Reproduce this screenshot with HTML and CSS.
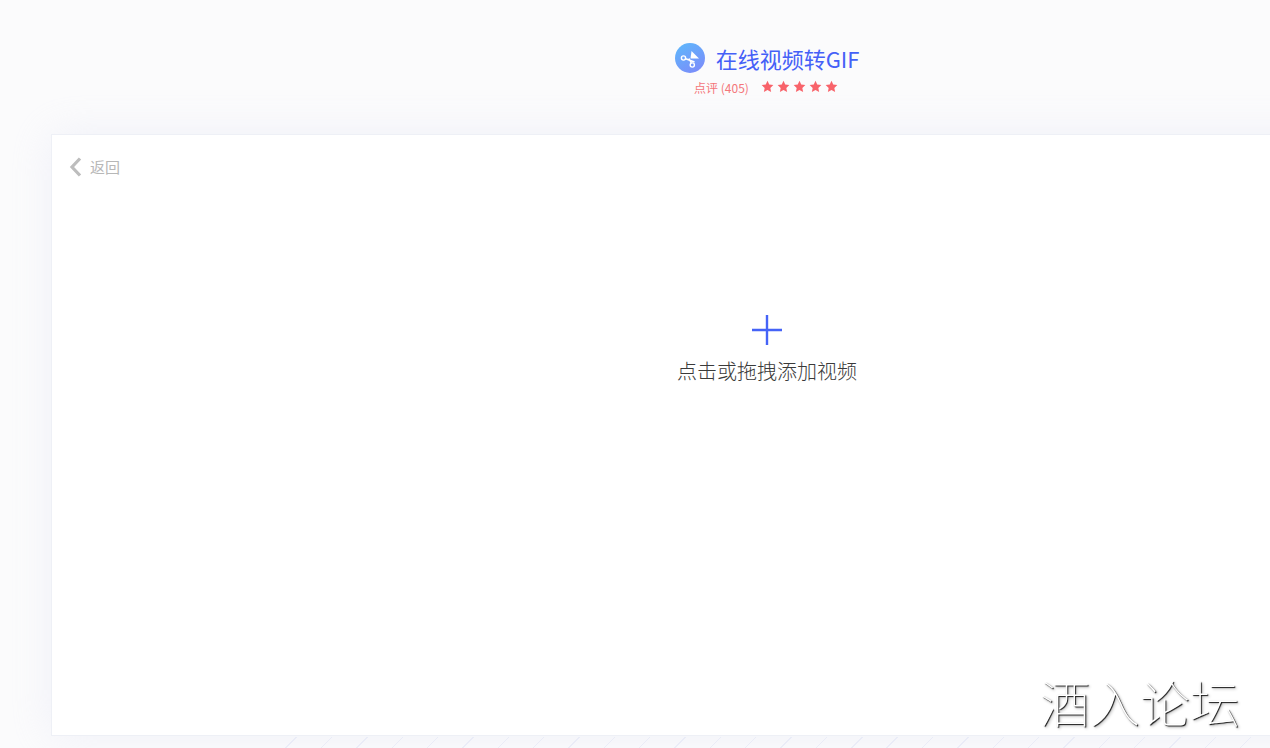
FILE: index.html
```html
<!DOCTYPE html>
<html lang="zh-CN">
<head>
<meta charset="utf-8">
<title>在线视频转GIF</title>
<link rel="stylesheet" href="styles.css">
</head>
<body>
<div class="page">
  <header class="head">
    <div class="title-row">
      <svg class="logo" width="30" height="30" viewBox="0 0 30 30">
        <defs>
          <linearGradient id="lg" x1="0.2" y1="0" x2="0.8" y2="1">
            <stop offset="0" stop-color="#5fb6fb"/>
            <stop offset="1" stop-color="#7c8bfa"/>
          </linearGradient>
        </defs>
        <circle cx="15" cy="15" r="15" fill="url(#lg)"/>
        <path d="M15.500 15.500 L16.500 8 L24 15.500 Z" fill="#fff"/>
        <path d="M10 15.500 L19.500 19 M14 15.500 L16.500 20.500" stroke="#fff" stroke-width="1.500" fill="none"/>
        <circle cx="8.500" cy="15" r="2.100" fill="none" stroke="#fff" stroke-width="1.400"/>
        <circle cx="17.300" cy="22" r="2.100" fill="none" stroke="#fff" stroke-width="1.400"/>
      </svg>
      <h1 class="title">在线视频转GIF</h1>
    </div>
    <div class="rating">
      <span class="reviews">点评 (405)</span>
      <span class="stars">
        <svg class="star" viewBox="0 0 24 24"><path d="M12 1.500l3.200 7 7.600.9-5.600 5.200 1.500 7.500-6.700-3.800-6.700 3.800 1.500-7.500L1.200 9.400l7.600-.9z"/></svg>
        <svg class="star" viewBox="0 0 24 24"><path d="M12 1.500l3.200 7 7.600.9-5.600 5.200 1.500 7.500-6.700-3.800-6.700 3.800 1.500-7.500L1.200 9.400l7.600-.9z"/></svg>
        <svg class="star" viewBox="0 0 24 24"><path d="M12 1.500l3.200 7 7.600.9-5.600 5.200 1.500 7.500-6.700-3.800-6.700 3.800 1.500-7.500L1.200 9.400l7.600-.9z"/></svg>
        <svg class="star" viewBox="0 0 24 24"><path d="M12 1.500l3.200 7 7.600.9-5.600 5.200 1.500 7.500-6.700-3.800-6.700 3.800 1.500-7.500L1.200 9.400l7.600-.9z"/></svg>
        <svg class="star" viewBox="0 0 24 24"><path d="M12 1.500l3.200 7 7.600.9-5.600 5.200 1.500 7.500-6.700-3.800-6.700 3.800 1.500-7.500L1.200 9.400l7.600-.9z"/></svg>
      </span>
    </div>
  </header>
  <main class="card">
    <a class="back">
      <svg class="chevron" width="14" height="20" viewBox="0 0 14 20"><path d="M11 1.500 L3 10 L11 18.500" fill="none" stroke="#bdbdbd" stroke-width="3.200"/></svg>
      <span>返回</span>
    </a>
    <div class="drop">
      <svg class="plus" width="30" height="30" viewBox="0 0 30 30"><path d="M15 0V30M0 15H30" stroke="#4563f7" stroke-width="2.400"/></svg>
      <p class="hint">点击或拖拽添加视频</p>
    </div>
  </main>
</div>
<div class="stripes"></div>
<div class="watermark">酒入论坛</div>
</body>
</html>
```
FILE: styles.css
```css
* { box-sizing: border-box; }
html, body { margin: 0; height: 100%; overflow: hidden; }
body {
  position: relative;
  background: #fbfbfc;
  font-family: "Noto Sans CJK SC", "Noto Sans", sans-serif;
}
.page {
  width: 1534px;
  padding: 43px 0 12px 51px;
}
.head {
  width: 1432px;
  height: 91px;
  display: flex;
  flex-direction: column;
  align-items: center;
}
.title-row {
  display: flex;
  align-items: center;
  gap: 11px;
  height: 30px;
}
.logo { display: block; }
.title {
  margin: 0;
  font-size: 22px;
  font-weight: 400;
  line-height: 30px;
  color: #4560f7;
}
.rating {
  display: flex;
  align-items: center;
  gap: 12px;
  margin-top: 4px;
  padding-right: 2px;
  height: 22px;
}
.reviews {
  font-size: 12px;
  line-height: 22px;
  color: #f4767a;
}
.stars { display: flex; gap: 3px; margin-top: -3px; }
.star { width: 13px; height: 13px; fill: #f8636a; display: block; }
.card {
  position: relative;
  z-index: 1;
  height: 602px;
  width: 1432px;
  background: #fff;
  border: 1px solid #eef0f6;
  box-shadow: 0 0 40px rgba(225, 228, 244, .4);
  padding: 21px 17px 0;
}
.back {
  display: flex;
  align-items: center;
  gap: 7px;
  height: 22px;
  font-size: 15px;
  line-height: 22px;
  color: #b7b7b7;
}
.chevron { display: block; }
.drop {
  display: flex;
  flex-direction: column;
  align-items: center;
  margin-top: 137px;
}
.plus { display: block; }
.hint {
  margin: 11px 0 0;
  font-size: 20px;
  line-height: 30px;
  font-weight: 300;
  color: #3a3a3a;
}
.stripes {
  position: absolute;
  left: 262px;
  right: 0;
  top: 737px;
  height: 11px;
  background: repeating-linear-gradient(135deg, transparent 0 24px, #eceef8 24px 25px);
}
.watermark {
  position: absolute;
  z-index: 2;
  left: 1040px;
  top: 666px;
  font-size: 50px;
  line-height: 70px;
  font-weight: 100;
  color: #fff;
  text-shadow: 1px 1px 1px #111, 2px 2px 3px rgba(0, 0, 0, .3);
}
```
